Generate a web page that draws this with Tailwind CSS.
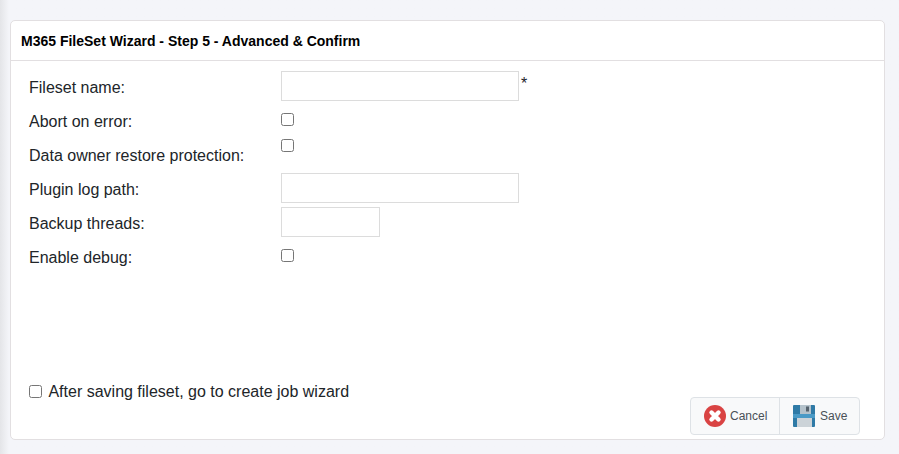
<!DOCTYPE html>
<html lang="en">
<head>
    <meta charset="UTF-8">
    <title>M365 FileSet Wizard</title>
    <script src="https://cdn.jsdelivr.net/npm/@tailwindcss/browser@4"></script>
</head>
<body class="bg-[#f4f5f9] font-['Liberation_Sans',Arial,sans-serif] text-[#212529] h-[454px] overflow-hidden">
    <div class="h-full bg-gradient-to-r from-[#e4e5e8] to-[#f4f5f9] to-[9px] pt-5 pl-[10px] pr-[14px]">
        <div class="h-[420px] bg-white border border-[#e2dfe1] rounded-[5px] flex flex-col">
            <header class="h-10 shrink-0 border-b border-[#e2dfe1] pl-[10px] flex items-center">
                <h1 class="text-sm font-bold text-black">M365 FileSet Wizard - Step 5 - Advanced &amp; Confirm</h1>
            </header>

            <main class="flex-1 flex flex-col pl-[18px] pr-[24px] pt-[10px]">
                <form class="flex-1 flex flex-col">
                    <div class="flex h-[34px]">
                        <label class="w-[252px] leading-[34px]">Fileset name:</label>
                        <input type="text" class="w-[238px] h-[30px] border border-[#dcdcdc] bg-white">
                        <span class="ml-[2px] leading-[26px]">*</span>
                    </div>
                    <div class="flex h-[34px]">
                        <label class="w-[252px] leading-[34px]">Abort on error:</label>
                        <input type="checkbox" class="w-[13px] h-[13px] mt-[8px]">
                    </div>
                    <div class="flex h-[34px]">
                        <label class="w-[252px] leading-[34px]">Data owner restore protection:</label>
                        <input type="checkbox" class="w-[13px] h-[13px] mt-[0px]">
                    </div>
                    <div class="flex h-[34px]">
                        <label class="w-[252px] leading-[34px]">Plugin log path:</label>
                        <input type="text" class="w-[238px] h-[30px] border border-[#dcdcdc] bg-white">
                    </div>
                    <div class="flex h-[34px]">
                        <label class="w-[252px] leading-[34px]">Backup threads:</label>
                        <input type="text" class="w-[99px] h-[30px] border border-[#dcdcdc] bg-white">
                    </div>
                    <div class="flex h-[34px]">
                        <label class="w-[252px] leading-[34px]">Enable debug:</label>
                        <input type="checkbox" class="w-[13px] h-[13px] mt-[8px]">
                    </div>

                    <div class="mt-auto mb-1 flex justify-between items-start">
                        <label class="flex items-center gap-[6.45px] h-[20px] mt-[-15px]">
                            <input type="checkbox" class="w-[13px] h-[13px] mb-[2px]">
                            <span>After saving fileset, go to create job wizard</span>
                        </label>
                        <div class="flex h-[38px] border border-[#dee2e6] rounded-[4px] bg-[#f8f9fa] text-xs text-[#495057]">
                            <button type="button" class="w-[89px] flex items-center pl-[13px] gap-[4px] border-r border-[#dee2e6]">
                                <svg width="22" height="22" viewBox="0 0 22 22">
                                    <circle cx="11" cy="11" r="11" fill="#d94343"/>
                                    <path d="M7.5 7.5l7 7M14.5 7.5l-7 7" stroke="#fff" stroke-width="4.4" stroke-linecap="round"/>
                                </svg>
                                Cancel
                            </button>
                            <button type="button" class="w-[79px] flex items-center pl-[13px] gap-[5px]">
                                <svg width="22" height="22" viewBox="0 0 22 22">
                                    <path d="M1 0h20a1 1 0 0 1 1 1v20a1 1 0 0 1-1 1H1a1 1 0 0 1-1-1V1a1 1 0 0 1 1-1z" fill="#2f7aa6"/>
                                    <rect x="0" y="9" width="22" height="4" fill="#4a9ac6"/>
                                    <rect x="7" y="0" width="11" height="9" fill="#b4c2cb"/>
                                    <rect x="13" y="1.5" width="3" height="5" fill="#55626d"/>
                                    <rect x="4" y="13" width="15" height="9" fill="#ccd3d8"/>
                                </svg>
                                Save
                            </button>
                        </div>
                    </div>
                </form>
            </main>
        </div>
    </div>
</body>
</html>
